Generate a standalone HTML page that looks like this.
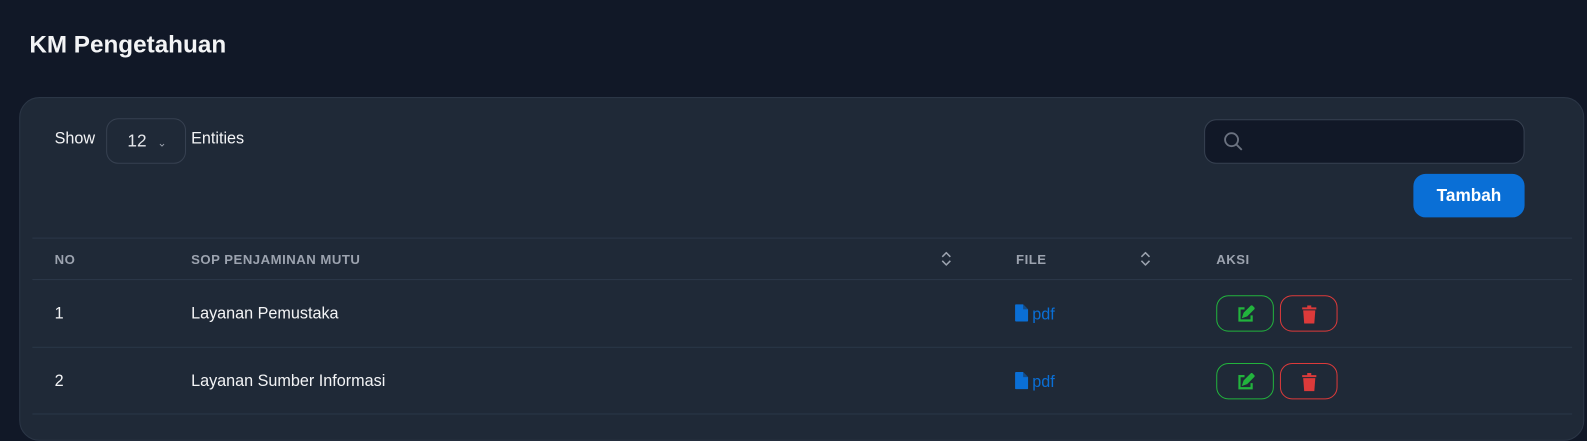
<!DOCTYPE html>
<html><head><style>
*{margin:0;padding:0;box-sizing:border-box}
body{width:1587px;height:417px;background:#111827;font-family:"Liberation Sans",sans-serif;color:#e5e7eb;overflow:hidden;position:relative}
#w{position:absolute;left:0;top:0;width:1587px;height:417px;transform:scale(1.011);transform-origin:0 0}
.t{position:absolute;left:29px;top:31px;font-size:24px;font-weight:bold;color:#f3f4f6;letter-spacing:0px}
.card{position:absolute;left:19px;top:96px;width:1548px;height:340px;background:#1f2937;border:1px solid #2b3646;border-radius:20px}
.a{position:absolute}
.sel{left:85px;top:20px;width:79px;height:45px;border:1px solid #374151;border-radius:12px;font-size:17px;padding:12px 0 0 20px}
.srch{left:1171px;top:21px;width:317px;height:44px;background:#111827;border:1px solid #374151;border-radius:12px}
.btn{left:1378px;top:75px;width:110px;height:43px;background:#0a6fd6;border-radius:12px;color:#fff;font-weight:bold;font-size:17px;text-align:center;line-height:43px}
.hl{position:absolute;left:12px;width:1523px;height:1px;background:#2a3748}
.h{font-size:13px;color:#9ca3af;font-weight:bold;letter-spacing:.5px;top:152px}
.c{font-size:16px;color:#f3f4f6}
.pdf{color:#0a6fd6;font-size:16px}
.b{width:57px;height:36px;border:1px solid;border-radius:12px}
</style></head><body><div id="w">
<div class="t">KM Pengetahuan</div>
<div class="card">
<div class="a c" style="left:34px;top:32px">Show</div>
<div class="a sel">12 <span style="font-size:11px;color:#9ca3af;margin-left:6px">&#x2304;</span></div>
<div class="a c" style="left:169px;top:32px">Entities</div>
<div class="a srch"><svg style="position:absolute;left:17px;top:10px" width="22" height="22" viewBox="0 0 24 24" fill="none" stroke="#6b7280" stroke-width="2"><circle cx="10" cy="10" r="7"/><path d="M15 15l6 6"/></svg></div>
<div class="a btn">Tambah</div>
<div class="hl" style="top:138px"></div>
<div class="hl" style="top:179px"></div>
<div class="hl" style="top:246px"></div>
<div class="hl" style="top:312px"></div>
<div class="a h" style="left:34px">NO</div>
<div class="a h" style="left:169px">SOP PENJAMINAN MUTU</div>
<div class="a h" style="left:985px">FILE</div>
<div class="a h" style="left:1183px">AKSI</div>
<svg class="a" style="left:910px;top:152px" width="12" height="14" viewBox="0 0 12 14" fill="none" stroke="#9ca3af" stroke-width="1.5"><path d="M2 5l4-4 4 4M2 9l4 4 4-4"/></svg>
<svg class="a" style="left:1107px;top:152px" width="12" height="14" viewBox="0 0 12 14" fill="none" stroke="#9ca3af" stroke-width="1.5"><path d="M2 5l4-4 4 4M2 9l4 4 4-4"/></svg>
<div class="a c" style="left:34px;top:205px">1</div>
<div class="a c" style="left:169px;top:205px">Layanan Pemustaka</div>
<div class="a c" style="left:34px;top:272px">2</div>
<div class="a c" style="left:169px;top:272px">Layanan Sumber Informasi</div>
<div class="a pdf" style="left:984px;top:204px"><svg width="13" height="17" viewBox="0 0 13 17" style="vertical-align:-2px;margin-right:4px"><path d="M1 0h7l5 5v11a1 1 0 0 1-1 1H1a1 1 0 0 1-1-1V1a1 1 0 0 1 1-1z" fill="#0a6fd6"/><path d="M8 0v5h5" fill="#1f2937" opacity=".5"/></svg>pdf</div>
<div class="a pdf" style="left:984px;top:271px"><svg width="13" height="17" viewBox="0 0 13 17" style="vertical-align:-2px;margin-right:4px"><path d="M1 0h7l5 5v11a1 1 0 0 1-1 1H1a1 1 0 0 1-1-1V1a1 1 0 0 1 1-1z" fill="#0a6fd6"/><path d="M8 0v5h5" fill="#1f2937" opacity=".5"/></svg>pdf</div>
<div class="a b" style="left:1183px;top:195px;border-color:#22b33d"><svg style="position:absolute;left:19px;top:9px" width="18" height="18" viewBox="0 0 18 18" fill="none" stroke="#22b33d" stroke-width="2.2"><path d="M8 3H3v12h12v-5"/><path d="M7 11l1-3 7-7 2 2-7 7z" fill="#22b33d"/></svg></div>
<div class="a b" style="left:1246px;top:195px;border-color:#dc3a3a"><svg style="position:absolute;left:20px;top:9px" width="16" height="18" viewBox="0 0 16 18"><path d="M1 2h14v2H1zM6 0h4v2H6z" fill="#dc3a3a"/><path d="M2 5h12l-1 13H3z" fill="#dc3a3a"/></svg></div>
<div class="a b" style="left:1183px;top:262px;border-color:#22b33d"><svg style="position:absolute;left:19px;top:9px" width="18" height="18" viewBox="0 0 18 18" fill="none" stroke="#22b33d" stroke-width="2.2"><path d="M8 3H3v12h12v-5"/><path d="M7 11l1-3 7-7 2 2-7 7z" fill="#22b33d"/></svg></div>
<div class="a b" style="left:1246px;top:262px;border-color:#dc3a3a"><svg style="position:absolute;left:20px;top:9px" width="16" height="18" viewBox="0 0 16 18"><path d="M1 2h14v2H1zM6 0h4v2H6z" fill="#dc3a3a"/><path d="M2 5h12l-1 13H3z" fill="#dc3a3a"/></svg></div>
</div>
</div></body></html>
